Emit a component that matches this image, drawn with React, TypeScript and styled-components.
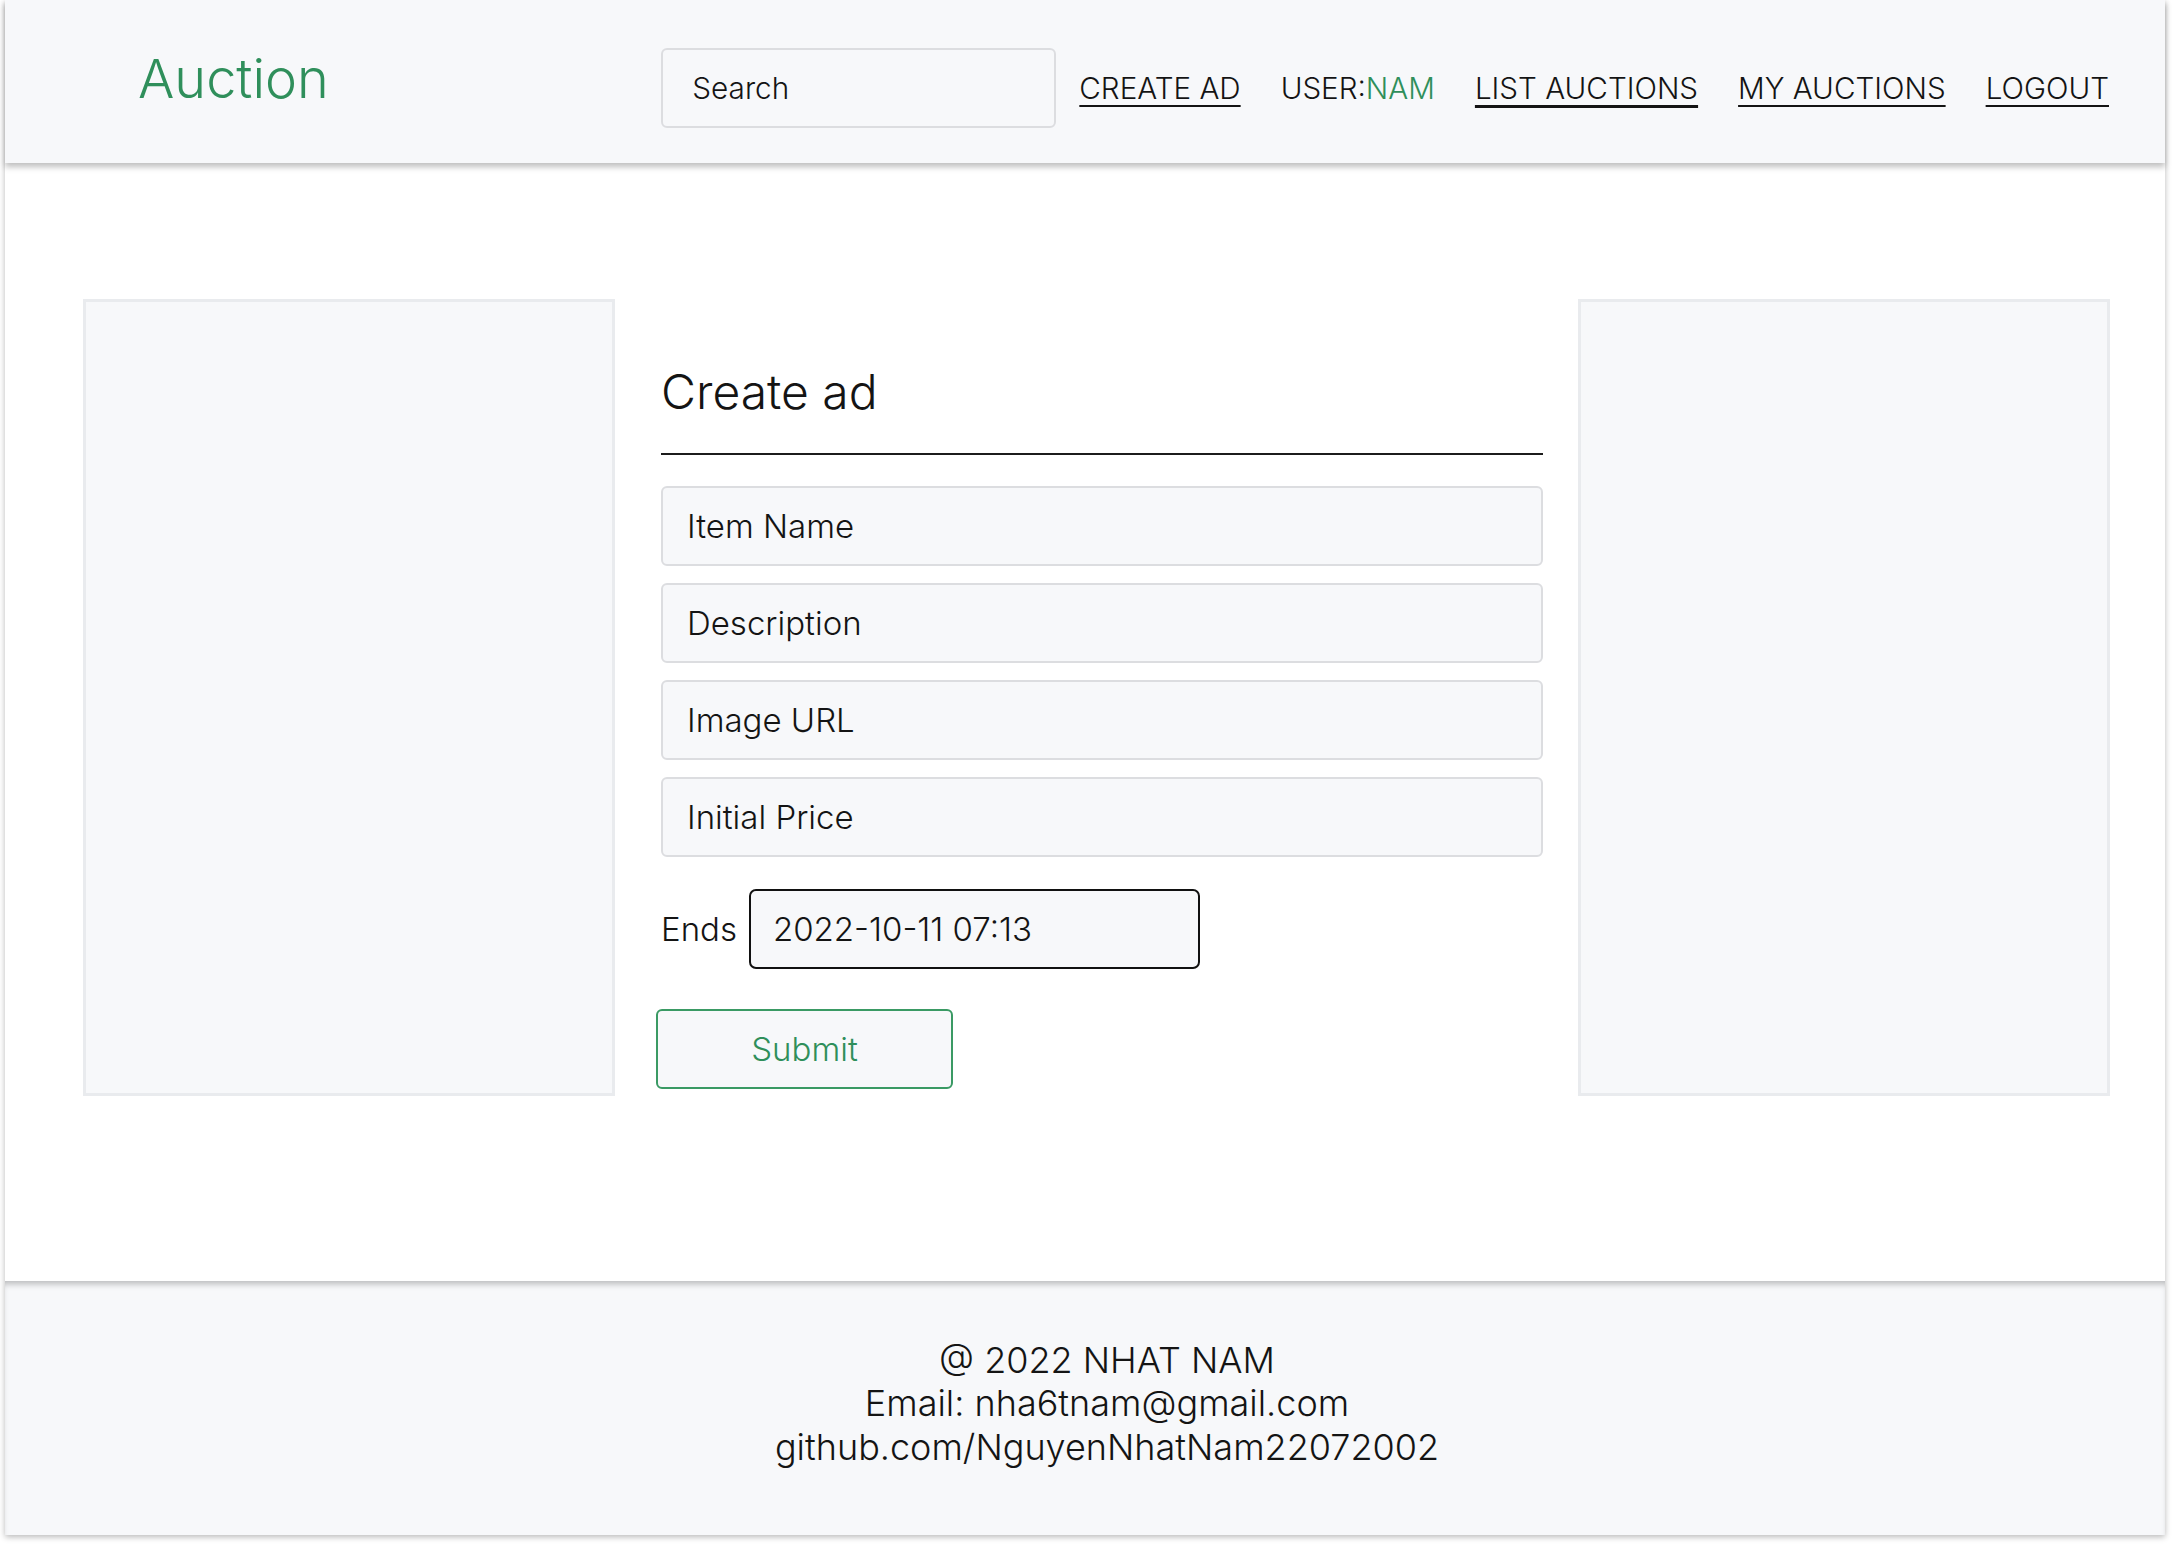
import React from 'react';
import styled, { createGlobalStyle } from 'styled-components';

const GlobalStyle = createGlobalStyle`
    html, body {
        margin: 0;
        padding: 0;
        background: #ffffff;
    }
    body {
        font-family: Inter, "Liberation Sans", sans-serif;
        font-weight: 300;
        color: #141414;
    }
    * {
        box-sizing: border-box;
    }
    input, button {
        font-family: inherit;
        font-weight: inherit;
    }
`;

const Page = styled.div`
    width: 2160px;
    margin: 0 0 14px 5px;
    background: #ffffff;
    box-shadow: 0 2px 6px rgba(0, 0, 0, 0.28);
`;

const Header = styled.header`
    position: relative;
    z-index: 1;
    height: 163px;
    display: flex;
    align-items: center;
    justify-content: space-between;
    padding: 0 56px 0 133px;
    background: #f7f8fa;
    box-shadow: 0 4px 6px rgba(0, 0, 0, 0.25);
`;

const Logo = styled.div`
    font-size: 54px;
    color: #2f8f5b;
    margin-top: -6px;
`;

const Right = styled.div`
    display: flex;
    align-items: center;
    gap: 23px;
    margin-top: 12px;
`;

const Search = styled.input`
    width: 395px;
    height: 80px;
    padding: 0 0 0 29px;
    font-size: 29.7px;
    background: #f7f8fa;
    border: 2px solid #dcdde0;
    border-radius: 6px;
    outline: none;
    &::placeholder {
        color: #141414;
    }
`;

const Nav = styled.nav`
    display: flex;
    align-items: center;
    gap: 40px;
`;

const NavLink = styled.a<{ $active?: boolean }>`
    font-size: 29.6px;
    color: #141414;
    text-decoration: underline;
    text-decoration-thickness: ${p => (p.$active ? '3px' : '2px')};
    text-underline-offset: 6px;
    cursor: pointer;
`;

const User = styled.span`
    font-size: 29.6px;
    color: #141414;
    span {
        color: #2f8f5b;
    }
`;

const Main = styled.main`
    display: grid;
    grid-template-columns: 532px 1fr 532px;
    column-gap: 40px;
    padding: 136px 55px 185px 78px;
`;

const SidePanel = styled.div`
    height: 797px;
    background: #f7f8fa;
    border: 3px solid #e9ebee;
`;

const Form = styled.form`
    display: flex;
    flex-direction: column;
    padding-left: 6px;
    margin-right: -5px;
`;

const Title = styled.h1`
    margin: 64px 0 0;
    font-size: 48px;
    font-weight: 300;
    line-height: 1.2;
`;

const Divider = styled.hr`
    margin: 32px 0 31px;
    border: none;
    border-top: 2px solid #1c1c1c;
    width: 100%;
`;

const Fields = styled.div`
    display: flex;
    flex-direction: column;
    gap: 17px;
`;

const Field = styled.input`
    width: 100%;
    height: 80px;
    padding: 0 0 0 24px;
    font-size: 33px;
    background: #f7f8fa;
    border: 2px solid #dcdde0;
    border-radius: 6px;
    outline: none;
    &::placeholder {
        color: #141414;
    }
`;

const EndsRow = styled.div`
    display: flex;
    align-items: center;
    gap: 12px;
    margin-top: 32px;
`;

const Label = styled.label`
    font-size: 33px;
`;

const DateInput = styled.input`
    width: 451px;
    height: 80px;
    padding: 0 0 0 22px;
    font-size: 33px;
    color: #141414;
    background: #f7f8fa;
    border: 2px solid #111111;
    border-radius: 7px;
    outline: none;
`;

const Submit = styled.button`
    width: 297px;
    height: 80px;
    margin: 40px 0 0 -5px;
    font-size: 33px;
    color: #2f8f5b;
    background: #f7f8fa;
    border: 2px solid #3a9a64;
    border-radius: 6px;
    cursor: pointer;
`;

const Footer = styled.footer`
    height: 254px;
    display: flex;
    flex-direction: column;
    align-items: center;
    justify-content: center;
    background: #f7f8fa;
    box-shadow: inset 0 6px 6px -3px rgba(0, 0, 0, 0.25);
    font-size: 36px;
    line-height: 43.5px;
    padding: 0 0 8px 44px;
`;

const fields = ['Item Name', 'Description', 'Image URL', 'Initial Price'];

const App = () => {
    return (
        <Page>
            <GlobalStyle />
            <Header>
                <Logo>Auction</Logo>
                <Right>
                    <Search placeholder="Search" />
                    <Nav>
                        <NavLink>CREATE AD</NavLink>
                        <User>USER:<span>NAM</span></User>
                        <NavLink $active>LIST AUCTIONS</NavLink>
                        <NavLink>MY AUCTIONS</NavLink>
                        <NavLink>LOGOUT</NavLink>
                    </Nav>
                </Right>
            </Header>
            <Main>
                <SidePanel />
                <Form onSubmit={e => e.preventDefault()}>
                    <Title>Create ad</Title>
                    <Divider />
                    <Fields>
                        {fields.map(f => <Field key={f} placeholder={f} />)}
                    </Fields>
                    <EndsRow>
                        <Label>Ends</Label>
                        <DateInput readOnly defaultValue="2022-10-11 07:13" />
                    </EndsRow>
                    <div>
                        <Submit type="submit">Submit</Submit>
                    </div>
                </Form>
                <SidePanel />
            </Main>
            <Footer>
                <div>@ 2022 NHAT NAM</div>
                <div>Email: nha6tnam@gmail.com</div>
                <div>github.com/NguyenNhatNam22072002</div>
            </Footer>
        </Page>
    );
};

export default App;
